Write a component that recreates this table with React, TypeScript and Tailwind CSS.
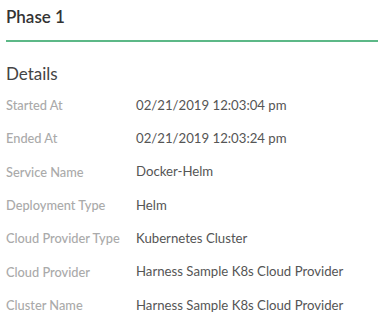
const rows: [string, string][] = [
  ["Started At", "02/21/2019 12:03:04 pm"],
  ["Ended At", "02/21/2019 12:03:24 pm"],
  ["Service Name", "Docker-Helm"],
  ["Deployment Type", "Helm"],
  ["Cloud Provider Type", "Kubernetes Cluster"],
  ["Cloud Provider", "Harness Sample K8s Cloud Provider"],
  ["Cluster Name", "Harness Sample K8s Cloud Provider"],
];

export default function App() {
  return (
    <div className="w-[378px] h-[333px] bg-white pl-[6px] font-['Lato',sans-serif]">
      <div className="h-[42px] border-b-2 border-[#5cb887] pt-[6px]">
        <h1 className="text-[17px] leading-[22px] font-semibold text-[#333]">Phase 1</h1>
      </div>
      <h2 className="mt-[21px] text-[17px] leading-[22px] text-[#444]">Details</h2>
      <div className="mt-[4px] flex flex-col">
        {rows.map(([label, value]) => (
          <div key={label} className="flex h-[33.3px] items-center">
            <span className="w-[130px] text-[12.8px] font-medium text-[#aaa]">{label}</span>
            <span className="text-[13.2px] text-[#555]">{value}</span>
          </div>
        ))}
      </div>
    </div>
  );
}
